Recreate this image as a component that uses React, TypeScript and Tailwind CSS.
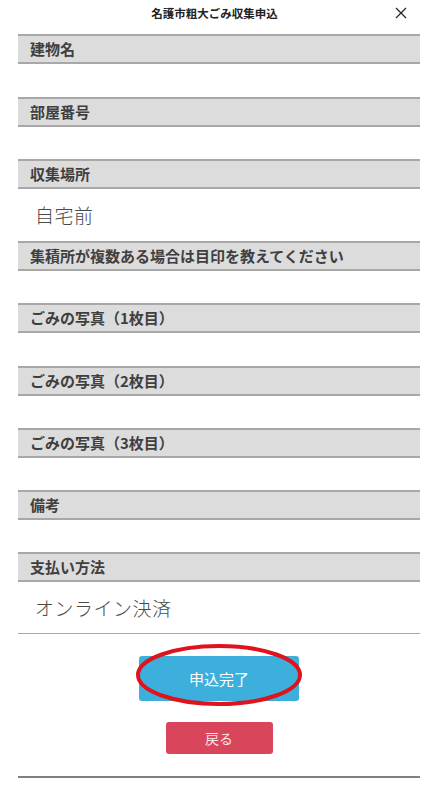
import React from "react";

const jp = { fontFamily: '"Noto Sans CJK JP", "Noto Sans", sans-serif' };

const SectionHeader: React.FC<{ label: string }> = ({ label }) => (
  <div className="h-[30px] box-border border-t-2 border-b-2 border-[#a8a8a8] bg-[#dcdcdc] flex items-center pl-3">
    <span className="text-[15px] font-bold text-[#3f3f3f] leading-[20px]">{label}</span>
  </div>
);

const Empty: React.FC<{ h?: number }> = ({ h = 32 }) => (
  <div className={h === 33 ? "h-[33px]" : "h-[32px]"} />
);

const ValueRow: React.FC<{ value: string; bordered?: boolean }> = ({ value, bordered }) => (
  <div
    className={
      "h-[52px] flex items-center pl-[17px] " +
      (bordered ? "border-b border-[#a8a8a8] box-border" : "")
    }
  >
    <span className="text-[19px] font-light text-[#4a4a4a] leading-[26px] tracking-[0.5px]">{value}</span>
  </div>
);

export default function App() {
  return (
    <div className="w-[429px] h-[785px] bg-white overflow-hidden" style={jp}>
      <div className="relative h-[34px] flex items-start justify-center pt-[4px]">
        <span className="text-[11.5px] font-bold text-[#222] leading-[18px]">名護市粗大ごみ収集申込</span>
        <svg className="absolute right-[22px] top-[7px]" width="12" height="12" viewBox="0 0 12 12">
          <path d="M1 1 L11 11 M11 1 L1 11" stroke="#222" strokeWidth="1.2" fill="none" />
        </svg>
      </div>
      <div className="ml-[18px] mr-[9px]">
        <SectionHeader label="建物名" />
        <Empty h={33} />
        <SectionHeader label="部屋番号" />
        <Empty />
        <SectionHeader label="収集場所" />
        <ValueRow value="自宅前" />
        <SectionHeader label="集積所が複数ある場合は目印を教えてください" />
        <Empty />
        <SectionHeader label="ごみの写真（1枚目）" />
        <Empty h={33} />
        <SectionHeader label="ごみの写真（2枚目）" />
        <Empty />
        <SectionHeader label="ごみの写真（3枚目）" />
        <Empty />
        <SectionHeader label="備考" />
        <Empty />
        <SectionHeader label="支払い方法" />
        <ValueRow value="オンライン決済" bordered />
        <div className="flex flex-col items-center pt-[22px]">
          <div className="relative">
            <button className="w-[160px] h-[45px] rounded-[3px] bg-[#3cafdc] text-white text-[15px] leading-none">
              申込完了
            </button>
            <svg
              className="absolute left-[-4px] top-[-12px] pointer-events-none"
              width="168"
              height="64"
              viewBox="0 0 168 64"
            >
              <ellipse cx="84" cy="31" rx="81" ry="29" stroke="#e0121c" strokeWidth="4" fill="none" />
            </svg>
          </div>
          <button className="mt-[21px] w-[107px] h-[32px] rounded-[3px] bg-[#d9455a] text-[#fbe3e6] text-[14px] leading-none">
            戻る
          </button>
        </div>
        <div className="mt-[22px] h-[2px] bg-[#808080]" />
      </div>
    </div>
  );
}
